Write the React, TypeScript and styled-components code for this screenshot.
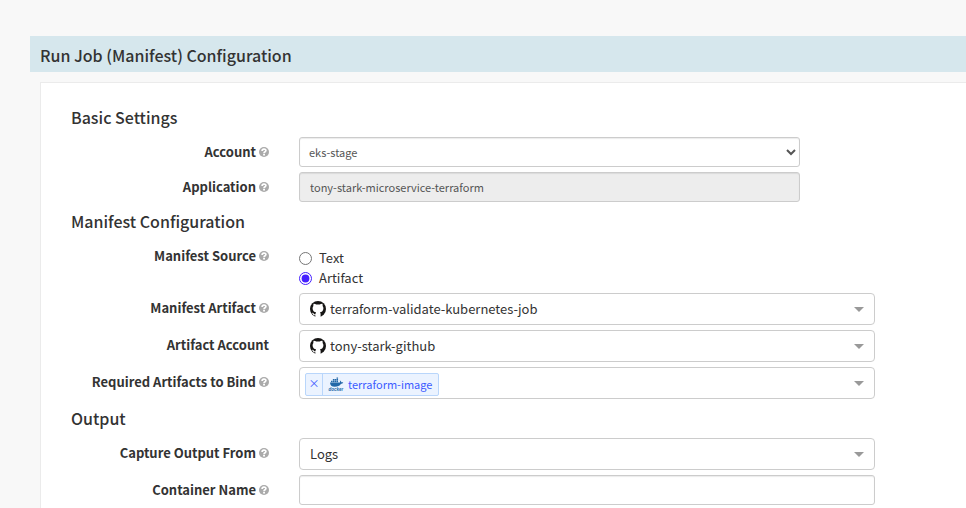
import React from 'react';
import styled, { createGlobalStyle } from 'styled-components';

const GlobalStyle = createGlobalStyle`
  *, *::before, *::after { box-sizing: border-box; }
  body {
    margin: 0;
    background: #f8f8f8;
    color: #333;
    font-family: "Source Sans Pro", "Noto Sans CJK SC", "Noto Sans", sans-serif;
    font-size: 13px;
    line-height: 20px;
  }
  button, input, select { font: inherit; color: inherit; }
`;

const Page = styled.main`
  padding: 36px 0 0 30px;
`;

const StageHeader = styled.h1`
  margin: 0;
  padding: 7px 10px 5px;
  background: #d6e7ed;
  font-size: 16px;
  font-weight: 500;
  line-height: 24px;
`;

const Panel = styled.form`
  margin: 10px 0 0 10px;
  padding: 22px 91px 3px 30px;
  background: #fff;
  border: 1px solid #ebebeb;
  border-width: 1px 0 0 1px;
`;

const Section = styled.section`
  display: flex;
  flex-direction: column;
  gap: 5px;
`;

const SectionTitle = styled.h2`
  margin: 0;
  padding: 0 0 3px;
  font-size: 16px;
  font-weight: 500;
  line-height: 24px;
`;

const SpacedSection = styled(Section)`
  margin-top: 7px;
`;

const Row = styled.div`
  display: grid;
  grid-template-columns: 198px minmax(0, 1fr);
  column-gap: 30px;
  align-items: start;
`;

const LabelCell = styled.div`
  display: flex;
  justify-content: flex-end;
  align-items: center;
  gap: 3px;
  padding-top: 5px;
  font-weight: 700;
  white-space: nowrap;
`;

const HelpButton = styled.button`
  display: flex;
  padding: 0;
  border: 0;
  background: none;
  color: #aaa;
  cursor: help;
`;

const NativeSelect = styled.select`
  width: 87%;
  height: 30px;
  padding: 0 5px;
  border: 1px solid #ccc;
  border-radius: 3px;
  background: #fff;
  box-shadow: inset 0 1px 1px rgba(0, 0, 0, 0.08);
  color: #555;
  font-size: 11px;
`;

const TextInput = styled.input<{ $narrow?: boolean }>`
  width: ${(p) => (p.$narrow ? '87%' : '100%')};
  height: 30px;
  padding: 0 10px;
  border: 1px solid #ccc;
  border-radius: 3px;
  background: #fff;
  box-shadow: inset 0 1px 1px rgba(0, 0, 0, 0.08);
  color: #555;
  font-size: 11px;
  &:disabled { background: #ededed; }
`;

const RadioGroup = styled.div`
  padding-top: 7px;
`;

const RadioLabel = styled.label`
  display: flex;
  align-items: center;
  gap: 7px;
`;

const Radio = styled.input`
  width: 13px;
  height: 13px;
  margin: 0;
  accent-color: #4520ff;
`;

const Picker = styled.div<{ $chip?: boolean }>`
  display: flex;
  align-items: center;
  gap: 4px;
  height: 32px;
  padding: 0 10px 0 ${(p) => (p.$chip ? '5px' : '10px')};
  border: 1px solid #ccc;
  border-radius: 4px;
  background: #fff;
`;

const PickerSelect = styled.select`
  flex: 1;
  min-width: 0;
  height: 30px;
  padding: 0;
  border: 0;
  outline: 0;
  appearance: none;
  background: none;
`;

const Chip = styled.span`
  display: flex;
  align-items: stretch;
  height: 23px;
  margin-top: 2px;
  border: 1px solid #b9d6fb;
  border-radius: 2px;
  background: #ebf3ff;
  color: #3b5bff;
  font-size: 11px;
`;

const ChipRemove = styled.button`
  width: 17px;
  padding: 0 0 2px;
  border: 0;
  border-right: 1px solid #b9d6fb;
  background: none;
  line-height: 18px;
`;

const ChipText = styled.span`
  display: flex;
  align-items: center;
  gap: 4px;
  padding: 0 6px 0 5px;
`;

function Help({ topic }: { topic: string }) {
  return (
    <HelpButton type="button" aria-label={`Help: ${topic}`}>
      <svg width="10" height="10" viewBox="0 0 20 20" aria-hidden="true">
        <circle cx="10" cy="10" r="10" fill="currentColor" />
        <path d="M6.2 8C6.2 2.8 13.8 3 13.8 7.2C13.8 9.8 10 9.4 10 12.6" fill="none" stroke="#fff" strokeWidth="3.4" />
        <rect x="8.2" y="13.8" width="3.8" height="3.2" fill="#fff" />
      </svg>
    </HelpButton>
  );
}

function Caret() {
  return (
    <svg width="10" height="5" viewBox="0 0 10 5" aria-hidden="true">
      <path d="M0 0H10L5 5Z" fill="#999" />
    </svg>
  );
}

function GithubMark() {
  return (
    <svg width="16" height="16" viewBox="0 0 16 16" aria-hidden="true">
      <circle cx="8" cy="8" r="8" fill="#161514" />
      <path
        fill="#fff"
        d="M3.6 2.7C4.6 2.6 5.5 3.1 6.2 3.6C7.4 3.3 8.6 3.3 9.8 3.6C10.5 3.1 11.4 2.6 12.4 2.7C12.8 3.6 12.7 4.3 12.6 4.9C13.2 5.6 13.5 6.4 13.4 7.4C13.3 9.9 11.9 11 9.9 11.3C10.4 11.8 10.6 12.3 10.6 13V16H5.4V14.3C3.6 14.6 3.2 13.6 2.8 12.9C2.5 12.4 2.1 12.2 2 11.9C3.3 11.6 3.8 12.7 4.2 13.1C4.6 13.5 5.1 13.4 5.5 13.2C5.5 12.4 5.7 11.7 6.1 11.3C4.1 11 2.7 9.9 2.6 7.4C2.5 6.4 2.8 5.6 3.4 4.9C3.3 4.3 3.2 3.6 3.6 2.7Z"
      />
    </svg>
  );
}

function DockerLogo() {
  return (
    <svg width="16" height="14" viewBox="0 0 32 28" aria-hidden="true">
      <g fill="#2368a8">
        <path d="M4 11H24C24.5 9.5 24 8 23.5 7C25.5 7.5 26.5 9 26.7 10.6C28 10.2 29.5 10.4 30.5 11C29.5 13 27.8 13.6 26 13.5C23.5 17.8 19.5 19.5 13.5 19.5C7.5 19.5 4 16.5 4 11Z" />
        <path d="M6 7.5H9V10.3H6ZM9.7 7.5H12.7V10.3H9.7ZM13.4 7.5H16.4V10.3H13.4ZM17.1 7.5H20.1V10.3H17.1ZM9.7 4.2H12.7V7H9.7ZM13.4 4.2H16.4V7H13.4ZM17.1 4.2H20.1V7H17.1ZM17.1 1H20.1V3.7H17.1Z" />
      </g>
      <text x="1" y="28" fontSize="9" fontWeight="700" fontStyle="italic" fill="#2368a8" fontFamily="Liberation Sans, sans-serif">docker</text>
    </svg>
  );
}

interface FieldProps {
  id: string;
  label: string;
  help?: boolean;
  children: React.ReactNode;
}

function Field({ id, label, help = true, children }: FieldProps) {
  return (
    <Row>
      <LabelCell>
        <label htmlFor={id}>{label}</label>
        {help && <Help topic={label} />}
      </LabelCell>
      {children}
    </Row>
  );
}

interface PickerControlProps {
  id: string;
  value: string;
  github?: boolean;
}

function PickerControl({ id, value, github }: PickerControlProps) {
  return (
    <Picker>
      {github && <GithubMark />}
      <PickerSelect id={id} defaultValue={value}>
        <option>{value}</option>
      </PickerSelect>
      <Caret />
    </Picker>
  );
}

export default function App() {
  return (
    <>
      <GlobalStyle />
      <Page>
        <StageHeader>Run Job (Manifest) Configuration</StageHeader>
        <Panel>
          <Section>
            <SectionTitle>Basic Settings</SectionTitle>
            <Field id="account" label="Account">
              <NativeSelect id="account" defaultValue="eks-stage">
                <option>eks-stage</option>
              </NativeSelect>
            </Field>
            <Field id="application" label="Application">
              <TextInput id="application" $narrow disabled defaultValue="tony-stark-microservice-terraform" />
            </Field>
          </Section>
          <SpacedSection>
            <SectionTitle>Manifest Configuration</SectionTitle>
            <Field id="source-artifact" label="Manifest Source">
              <RadioGroup role="radiogroup" aria-label="Manifest Source">
                <RadioLabel>
                  <Radio type="radio" name="source" value="text" />
                  Text
                </RadioLabel>
                <RadioLabel>
                  <Radio id="source-artifact" type="radio" name="source" value="artifact" defaultChecked />
                  Artifact
                </RadioLabel>
              </RadioGroup>
            </Field>
            <Field id="manifest-artifact" label="Manifest Artifact">
              <PickerControl id="manifest-artifact" value="terraform-validate-kubernetes-job" github />
            </Field>
            <Field id="artifact-account" label="Artifact Account" help={false}>
              <PickerControl id="artifact-account" value="tony-stark-github" github />
            </Field>
            <Field id="required-artifacts" label="Required Artifacts to Bind">
              <Picker $chip>
                <Chip>
                  <ChipRemove type="button" aria-label="Remove terraform-image">×</ChipRemove>
                  <ChipText>
                    <DockerLogo />
                    terraform-image
                  </ChipText>
                </Chip>
                <PickerSelect id="required-artifacts" defaultValue="">
                  <option value="" />
                </PickerSelect>
                <Caret />
              </Picker>
            </Field>
          </SpacedSection>
          <SpacedSection>
            <SectionTitle>Output</SectionTitle>
            <Field id="capture-output" label="Capture Output From">
              <PickerControl id="capture-output" value="Logs" />
            </Field>
            <Field id="container-name" label="Container Name">
              <TextInput id="container-name" type="text" />
            </Field>
          </SpacedSection>
        </Panel>
      </Page>
    </>
  );
}
